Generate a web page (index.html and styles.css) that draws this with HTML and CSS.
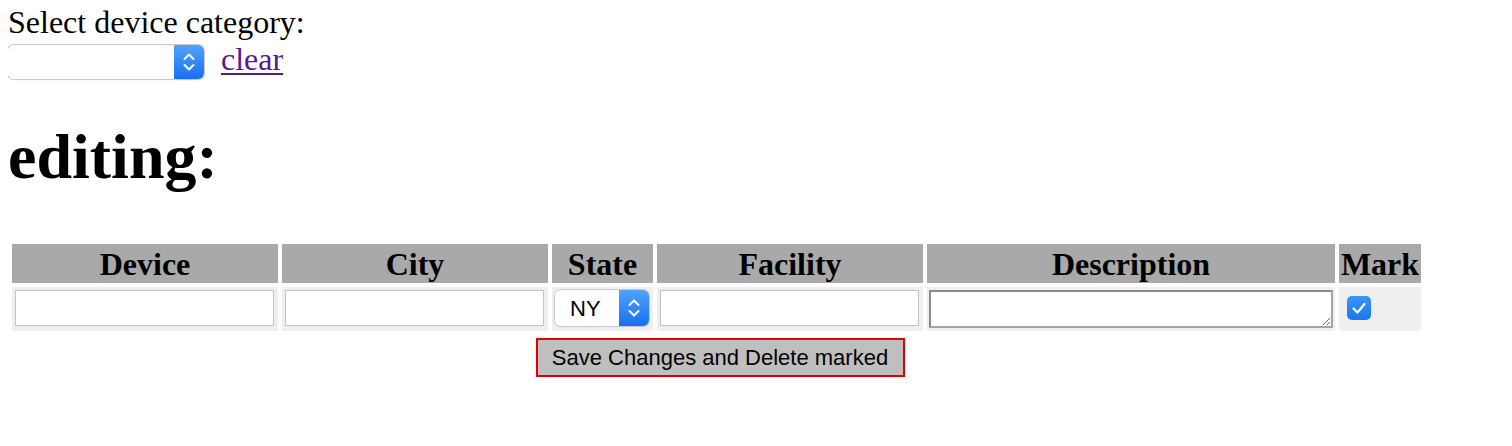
FILE: index.html
```html
<!DOCTYPE html>
<html lang="en">
<head>
<meta charset="utf-8">
<title>Device editor</title>
<link rel="stylesheet" href="styles.css">
</head>
<body>
<div class="category">
  <div class="category__label">Select device category:</div>
  <div class="category__controls">
    <span class="mac-select mac-select--category">
      <select class="mac-select__field" aria-label="Device category"><option></option></select>
      <span class="mac-select__arrow"><svg width="30" height="34" viewBox="0 0 30 34"><polyline points="10.5,14 15,9.5 19.5,14" /><polyline points="10.5,20 15,24.5 19.5,20" /></svg></span>
    </span>
    <a class="category__clear" href="#">clear</a>
  </div>
</div>
<h1 class="title">editing:</h1>
<form class="editor">
  <table class="grid">
    <thead>
      <tr>
        <th class="grid__col grid__col--device">Device</th>
        <th class="grid__col grid__col--city">City</th>
        <th class="grid__col grid__col--state">State</th>
        <th class="grid__col grid__col--facility">Facility</th>
        <th class="grid__col grid__col--desc">Description</th>
        <th class="grid__col grid__col--mark">Mark</th>
      </tr>
    </thead>
    <tbody>
      <tr>
        <td class="grid__cell"><input class="grid__input" type="text"></td>
        <td class="grid__cell"><input class="grid__input" type="text"></td>
        <td class="grid__cell">
          <span class="mac-select mac-select--state">
            <select class="mac-select__field mac-select__field--state" aria-label="State"><option>NY</option></select>
            <span class="mac-select__arrow"><svg width="30" height="36" viewBox="0 0 30 36"><polyline points="10.5,15 15,10.5 19.5,15" /><polyline points="10.5,21 15,25.5 19.5,21" /></svg></span>
          </span>
        </td>
        <td class="grid__cell"><input class="grid__input" type="text"></td>
        <td class="grid__cell grid__cell--desc"><textarea class="grid__textarea"></textarea></td>
        <td class="grid__cell grid__cell--mark">
          <span class="check">
            <input class="check__box" type="checkbox" checked aria-label="Mark">
            <svg class="check__tick" width="24" height="24" viewBox="0 0 24 24"><polyline points="6.5,12.5 10.5,16.5 17.5,8" /></svg>
          </span>
        </td>
      </tr>
      <tr>
        <td class="grid__actions" colspan="6"><button class="save" type="button">Save Changes and Delete marked</button></td>
      </tr>
    </tbody>
  </table>
</form>
</body>
</html>
```
FILE: styles.css
```css
body {
  margin: 8px;
  background: #ffffff;
  color: #000000;
  font-family: "Liberation Serif", "Times New Roman", serif;
  font-size: 32px;
}

.category__label {
  line-height: 28px;
}

.category__controls {
  display: flex;
  align-items: flex-start;
  gap: 17px;
  margin-top: 9px;
}

.category__clear {
  color: #551a8b;
  line-height: 28px;
  text-decoration: underline;
  text-decoration-thickness: 2px;
  text-underline-offset: 3px;
}

.mac-select {
  display: inline-flex;
  border-radius: 6px;
  overflow: hidden;
  box-shadow: 0 0 0 1px #c9c9c9, 0 1px 1px rgba(0, 0, 0, 0.18);
  background: #ffffff;
}

.mac-select--category {
  width: 196px;
  height: 34px;
}

.mac-select--state {
  width: 94px;
  height: 36px;
  vertical-align: top;
}

.mac-select__field {
  appearance: none;
  -webkit-appearance: none;
  flex: 1;
  min-width: 0;
  border: none;
  margin: 0;
  padding: 0 0 0 15px;
  background: #ffffff;
  font-family: "Liberation Sans", Arial, sans-serif;
  font-size: 22px;
  color: #000000;
  outline: none;
}

.mac-select__arrow {
  display: flex;
  width: 30px;
  flex: none;
  background: linear-gradient(#52a2fb, #1770f1);
}

.mac-select__arrow polyline {
  fill: none;
  stroke: #ffffff;
  stroke-width: 2;
  stroke-linecap: round;
  stroke-linejoin: round;
}

.title {
  margin: 46px 0 51px;
  font-size: 64px;
  line-height: 64px;
  font-weight: bold;
}

.grid {
  border-spacing: 4px;
  margin: 0;
}

.grid__col {
  height: 39px;
  padding: 0;
  background: #a9a9a9;
  font-size: 32px;
  font-weight: bold;
  text-align: center;
  line-height: 36px;
}

.grid__col--device,
.grid__col--city,
.grid__col--facility {
  width: 266px;
}

.grid__col--state {
  width: 100px;
}

.grid__col--desc {
  width: 408px;
}

.grid__col--mark {
  width: 82px;
}

.grid__cell {
  height: 43px;
  padding: 3px 4px 4px 3px;
  box-sizing: border-box;
  background: #efefef;
  vertical-align: top;
}

.grid__input {
  display: block;
  box-sizing: border-box;
  width: 259px;
  height: 36px;
  margin: 0;
  border: 1px solid #c3c3c3;
  background: #ffffff;
  font-family: "Liberation Sans", Arial, sans-serif;
  font-size: 20px;
  padding: 0 4px;
}

.grid__cell--desc {
  padding: 3px 2px 2px 2px;
}

.grid__textarea {
  display: block;
  box-sizing: border-box;
  width: 404px;
  height: 38px;
  margin: 0;
  border: 2px solid #8a8a8a;
  border-right-color: #a5a5a5;
  border-bottom-color: #a5a5a5;
  background: #ffffff;
  font-family: "Liberation Sans", Arial, sans-serif;
  font-size: 20px;
  padding: 2px;
}

.grid__cell--mark {
  padding: 9px 0 0 8px;
}

.check {
  position: relative;
  display: block;
  width: 24px;
  height: 24px;
}

.check__box {
  appearance: none;
  -webkit-appearance: none;
  display: block;
  width: 24px;
  height: 24px;
  margin: 0;
  border: none;
  border-radius: 5px;
  background: linear-gradient(#3b92fa, #1878f2);
}

.check__tick {
  position: absolute;
  left: 0;
  top: 0;
  pointer-events: none;
}

.check__tick polyline {
  fill: none;
  stroke: #ffffff;
  stroke-width: 2.2;
  stroke-linecap: round;
  stroke-linejoin: round;
}

.grid__actions {
  padding: 3px 0 0 7px;
}

.save {
  display: block;
  box-sizing: border-box;
  width: 369px;
  height: 39px;
  margin: 0 auto;
  padding: 0;
  border: 2px solid #e00000;
  background: #bfbfbf;
  color: #000000;
  font-family: "Liberation Sans", Arial, sans-serif;
  font-size: 22px;
}
```
